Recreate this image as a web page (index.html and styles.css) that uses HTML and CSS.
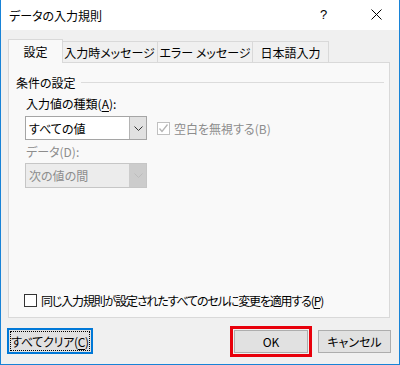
FILE: index.html
```html
<!DOCTYPE html>
<html lang="ja">
<head>
    <meta charset="UTF-8">
    <title>データの入力規則</title>
    <link rel="stylesheet" href="styles.css">
</head>
<body>
    <div class="window">
        <!-- Title bar -->
        <div class="titlebar">
            <span class="title">データの入力規則</span>
            <span class="help">?</span>
            <span class="close">
                <svg width="11" height="11" viewBox="0 0 11 11">
                    <path d="M0.5 0.5 L10.5 10.5 M10.5 0.5 L0.5 10.5" stroke="#000" stroke-width="1" fill="none"/>
                </svg>
            </span>
        </div>

        <div class="dialog">
            <!-- Tabs -->
            <div class="tabs">
                <div class="tab active">設定</div>
                <div class="tab">入力時メッセージ</div>
                <div class="tab">エラー メッセージ</div>
                <div class="tab">日本語入力</div>
            </div>

            <!-- Tab page -->
            <div class="panel">
                <div class="group-title">
                    <span>条件の設定</span>
                    <span class="rule"></span>
                </div>

                <div class="field-label">入力値の種類(<u>A</u>):</div>
                <div class="field-row">
                    <div class="combo">
                        <span class="combo-text">すべての値</span>
                        <span class="combo-btn">
                            <svg width="9" height="5" viewBox="0 0 9 5">
                                <path d="M0.5 0.5 L4.5 4.5 L8.5 0.5" stroke="#333" stroke-width="1" fill="none"/>
                            </svg>
                        </span>
                    </div>
                    <label class="check disabled">
                        <span class="box">
                            <svg width="11" height="11" viewBox="0 0 11 11">
                                <path d="M1.5 5.5 L4 8.5 L9.5 1.5" stroke="#b4b4b4" stroke-width="1.3" fill="none"/>
                            </svg>
                        </span>
                        <span>空白を無視する(B)</span>
                    </label>
                </div>

                <div class="field-label disabled">データ(D):</div>
                <div class="combo combo-disabled">
                    <span class="combo-text">次の値の間</span>
                    <span class="combo-btn">
                        <svg width="9" height="5" viewBox="0 0 9 5">
                            <path d="M0.5 0.5 L4.5 4.5 L8.5 0.5" stroke="#bcbcbc" stroke-width="1" fill="none"/>
                        </svg>
                    </span>
                </div>

                <label class="check apply-all">
                    <span class="box"></span>
                    <span class="apply-text">同じ入力規則が設定されたすべてのセルに変更を適用する(<u>P</u>)</span>
                </label>
            </div>

            <!-- Buttons -->
            <div class="footer">
                <button class="btn btn-focus"><span class="focus-ring"><span>すべてクリア(<u>C</u>)</span></span></button>
                <div class="spacer"></div>
                <button class="btn btn-ok">OK</button>
                <button class="btn btn-cancel">キャンセル</button>
            </div>
        </div>
    </div>
</body>
</html>
```

FILE: styles.css
```css
/* General */
* {
    box-sizing: border-box;
}
body {
    margin: 0;
    font-family: "Noto Sans CJK JP", "Noto Sans", sans-serif;
    font-size: 12px;
    font-feature-settings: "palt";
    color: #000;
    background: #fff;
}
u {
    text-decoration-thickness: 1px;
    text-underline-offset: 2px;
}
.window {
    width: 400px;
    height: 365px;
    border: 1px solid #1883d7;
    border-top: none;
    display: flex;
    flex-direction: column;
    background: #f0f0f0;
}

/* Title bar */
.titlebar {
    height: 30px;
    background: #fff;
    display: flex;
    align-items: center;
    padding-left: 8px;
    flex-shrink: 0;
}
.title {
    flex: 1;
}
.help {
    width: 12px;
    font-size: 13px;
    font-family: "Liberation Sans", sans-serif;
    margin-right: 39px;
    margin-bottom: 1px;
}
.close {
    display: flex;
    margin-right: 17px;
    margin-bottom: 1px;
}

/* Dialog body */
.dialog {
    flex: 1;
    display: flex;
    flex-direction: column;
    padding: 9px 9px 0 7px;
}
.tabs {
    display: flex;
    align-items: flex-end;
    height: 23px;
    position: relative;
    z-index: 1;
}
.tab {
    height: 21px;
    padding: 0 8px;
    display: flex;
    align-items: center;
    border: 1px solid #d9d9d9;
    border-bottom: none;
    background: #f0f0f0;
    margin-left: -1px;
    white-space: nowrap;
}
.tab:nth-child(2) { width: 97px; justify-content: center; }
.tab:nth-child(3) { width: 96px; justify-content: center; }
.tab:nth-child(4) { width: 77px; justify-content: center; }
.tab.active {
    height: 24px;
    width: 55px;
    margin-left: 0;
    margin-right: -1px;
    margin-bottom: -1px;
    justify-content: center;
    background: #f9f9f9;
    z-index: 2;
}

/* Tab page */
.panel {
    height: 256px;
    border: 1px solid #d9d9d9;
    background: #f9f9f9;
    display: flex;
    flex-direction: column;
    padding: 11px 5px 9px 7px;
}
.group-title {
    display: flex;
    align-items: center;
    gap: 5px;
    height: 16px;
}
.rule {
    flex: 1;
    border-top: 1px solid #dcdcdc;
    margin-top: 1px;
}
.field-label {
    height: 16px;
    line-height: 16px;
    margin: 6px 0 0 10px;
}
.field-label.disabled {
    margin-top: 4px;
    color: #8d8d8d;
}
.field-row {
    display: flex;
    align-items: center;
    margin: 4px 0 0 9px;
}

/* Combo boxes */
.combo {
    width: 122px;
    height: 24px;
    border: 1px solid #a5a5a5;
    background: #fff;
    display: flex;
}
.combo-text {
    flex: 1;
    padding-left: 3px;
    display: flex;
    align-items: center;
}
.combo-btn {
    width: 17px;
    background: #e1e1e1;
    border-left: 1px solid #b4b4b4;
    display: flex;
    align-items: center;
    justify-content: center;
}
.combo-disabled {
    margin: 3px 0 0 9px;
    height: 25px;
    background: #ececec;
    border-color: #c6c6c6;
    color: #8d8d8d;
}
.combo-disabled .combo-btn {
    background: #cccccc;
    border-left: 1px solid #cccccc;
}

/* Check boxes */
.check {
    display: flex;
    align-items: center;
    gap: 4px;
    white-space: nowrap;
}
.box {
    width: 13px;
    height: 13px;
    border: 1px solid #333;
    background: #fff;
    display: flex;
    align-items: center;
    justify-content: center;
}
.check.disabled {
    margin-left: 10px;
    color: #8d8d8d;
}
.check.disabled .box {
    border-color: #c0c0c0;
}
.apply-all {
    margin-top: auto;
    margin-left: 8px;
    height: 16px;
}
.apply-text {
    letter-spacing: -1.15px;
}

/* Buttons */
.footer {
    display: flex;
    align-items: center;
    margin-top: 10px;
}
.spacer {
    flex: 1;
}
.btn {
    font: inherit;
    color: #000;
    background: #e1e1e1;
    border: 1px solid #adadad;
    height: 23px;
    padding: 0;
    display: flex;
    align-items: center;
    justify-content: center;
    white-space: nowrap;
}
.btn-focus {
    width: 86px;
    height: 26px;
    margin-left: -1px;
    border: 2px solid #0078d7;
    padding: 1px;
}
.focus-ring {
    flex: 1;
    height: 100%;
    border: 1px dotted #000;
    display: flex;
    align-items: center;
    justify-content: center;
    letter-spacing: -0.3px;
}
.btn-ok {
    width: 74px;
    outline: 3px solid #e8000b;
    outline-offset: 1px;
}
.btn-cancel {
    width: 73px;
    margin-left: 10px;
    margin-right: -1px;
}
```
